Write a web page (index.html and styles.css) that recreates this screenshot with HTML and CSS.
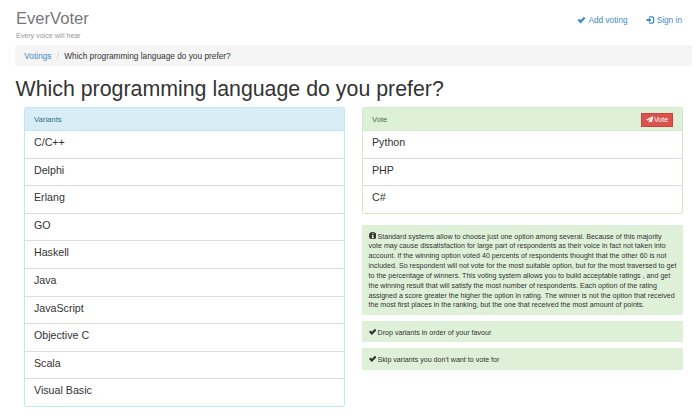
FILE: index.html
```
<!DOCTYPE html>
<html lang="en">
<head>
<meta charset="utf-8">
<title>EverVoter</title>
<link rel="stylesheet" href="styles.css">
</head>
<body>
<svg class="defs" width="0" height="0">
  <symbol id="check" viewBox="0 0 16 16"><path d="M0 8.600 L3.200 5.400 L6.200 8.200 L12.700 1.400 L16 4.600 L6.200 14.800 Z"/></symbol>
  <symbol id="login" viewBox="0 0 16 16"><path d="M5 0.500h7a3.500 3.500 0 0 1 3.500 3.500v8a3.500 3.500 0 0 1-3.500 3.500H5v-2.500h6.300a1.500 1.500 0 0 0 1.500-1.500V4.500a1.500 1.500 0 0 0-1.500-1.500H5z"/><path d="M0 6.200h4.500V3L10 8l-5.500 5V9.800H0z"/></symbol>
  <symbol id="send" viewBox="0 0 16 16"><path d="M16 0 L14 14.500 L9.300 12.500 L6.500 16 V11.400 L13.500 3.200 L4.700 10.500 L0 8.600 Z"/></symbol>
  <symbol id="info" viewBox="0 0 16 16"><path fill-rule="evenodd" d="M8 0a8 8 0 1 0 0 16A8 8 0 0 0 8 0zM6.700 2.500h2.800v2.300H6.700zM5.800 6.400h3.800v5h1.200v1.700H5.600v-1.700h1.300V8.100H5.800z"/></symbol>
</svg>
<header class="header">
  <div>
    <div class="brand">EverVoter</div>
    <div class="tagline">Every voice will hear</div>
  </div>
  <nav class="nav">
    <a href="#"><svg class="icon"><use href="#check"/></svg>Add voting</a>
    <a href="#"><svg class="icon"><use href="#login"/></svg>Sign in</a>
  </nav>
</header>
<div class="breadcrumb"><a href="#">Votings</a><span class="sep">/</span><span>Which programming language do you prefer?</span></div>
<h1>Which programming language do you prefer?</h1>
<main class="columns">
  <section class="panel info">
    <div class="panel-head">Variants</div>
    <ul>
      <li>C/C++</li><li>Delphi</li><li>Erlang</li><li>GO</li><li>Haskell</li><li>Java</li><li>JavaScript</li><li>Objective C</li><li>Scala</li><li>Visual Basic</li>
    </ul>
  </section>
  <div>
    <section class="panel success">
      <div class="panel-head">Vote<button class="vote"><svg class="icon"><use href="#send"/></svg>Vote</button></div>
      <ul><li>Python</li><li>PHP</li><li>C#</li></ul>
    </section>
    <p class="note first"><svg class="icon"><use href="#info"/></svg>Standard systems allow to choose just one option among several. Because of this majority<br>vote may cause dissatisfaction for large part of respondents as their voice in fact not taken into<br>account. If the winning option voted 40 percents of respondents thought that the other 60 is not<br>included. So respondent will not vote for the most suitable option, but for the most traversed to get<br>to the percentage of winners. This voting system allows you to build acceptable ratings , and get<br>the winning result that will satisfy the most number of respondents. Each option of the rating<br>assigned a score greater the higher the option in rating. The winner is not the option that received<br>the most first places in the ranking, but the one that received the most amount of points.</p>
    <p class="note"><svg class="icon"><use href="#check"/></svg>Drop variants in order of your favour</p>
    <p class="note"><svg class="icon"><use href="#check"/></svg>Skip variants you don't want to vote for</p>
  </div>
</main>
</body>
</html>
```
FILE: styles.css
```
* { box-sizing: border-box; }
body {
  margin: 0;
  height: 414px;
  overflow: hidden;
  padding-left: 15px;
  background: #fff;
  color: #333;
  font-family: "Liberation Sans", Arial, sans-serif;
  font-size: 8.3px;
  white-space: nowrap;
}
.defs { display: block; position: absolute; }
a { color: #428bca; text-decoration: none; }
.icon { width: 8px; height: 8px; fill: currentColor; }
.header { display: flex; justify-content: space-between; height: 45px; padding: 9px 18px 0 1px; }
.brand { color: #777; font-size: 16.6px; line-height: 19px; }
.tagline { color: #999; font-size: 7.1px; line-height: 10px; margin-top: 3px; }
.nav { display: flex; gap: 18px; padding-top: 6px; line-height: 10px; }
.nav .icon { width: 9px; height: 8px; margin-right: 2px; vertical-align: -1px; }
.breadcrumb { width: 677px; height: 21px; padding-left: 9.300px; line-height: 22px; background: #f5f5f5; border-radius: 2px; }
.sep { color: #ccc; margin: 0 5.200px; }
h1 { margin: 11px 0 0 0.5px; font-size: 21.35px; font-weight: 500; line-height: 24px; }
.columns { display: grid; grid-template-columns: 321px 321px; gap: 17px; padding: 6px 0 0 9px; align-items: start; }
.panel { border: 1px solid #bce8f1; border-radius: 2px; }
.panel-head { display: flex; justify-content: space-between; align-items: center; height: 23px; padding: 0 9px; font-size: 7.700px; color: #31708f; background: #d9edf7; border-bottom: 1px solid #bce8f1; }
.success { border-color: #d6e9c6; }
.success .panel-head { color: #3c763d; background: #dff0d8; border-color: #d6e9c6; }
ul { list-style: none; margin: 0; padding: 0; }
li { height: 27.600px; padding: 5px 9px 0; border-bottom: 1px solid #ddd; font-size: 10.67px; line-height: 13px; }
li:last-child { height: 26.600px; border-bottom: 0; }
.vote { display: flex; align-items: center; height: 14px; width: 32px; margin-top: 2px; padding: 0 0 1px 4px; border: 1px solid #d43f3a; background: #d9534f; color: #fff; font: 7.100px "Liberation Sans", Arial, sans-serif; }
.vote .icon { width: 7px; height: 7px; margin-right: 1px; flex: none; }
.note { margin: 6px 0 0; padding: 6.800px 6.500px 0; height: 21.500px; background: #dff0d8; font-size: 7.120px; line-height: 9.850px; }
.note .icon { width: 7.500px; height: 7.500px; margin-right: 1.500px; vertical-align: -0.500px; }
.note.first { height: 90px; margin-top: 11px; }
```
